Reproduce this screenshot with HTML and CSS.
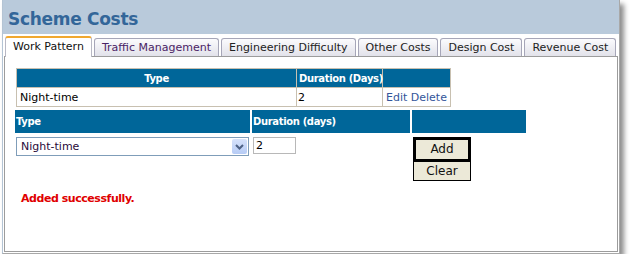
FILE: index.html
```html
<!DOCTYPE html>
<html>
<head>
<meta charset="utf-8">
<link rel="stylesheet" href="styles.css">
</head>
<body>
<div class="window">
  <div class="header"><h1 class="title">Scheme Costs</h1></div>
  <div class="tabs">
    <span class="tab active">Work Pattern</span>
    <span class="tab visited">Traffic Management</span>
    <span class="tab">Engineering Difficulty</span>
    <span class="tab">Other Costs</span>
    <span class="tab">Design Cost</span>
    <span class="tab">Revenue Cost</span>
  </div>
  <div class="panel">
    <table class="list">
      <colgroup>
        <col class="c1"><col class="c2"><col class="c3">
      </colgroup>
      <tr>
        <th>Type</th>
        <th>Duration (Days)</th>
        <th></th>
      </tr>
      <tr>
        <td>Night-time</td>
        <td>2</td>
        <td><a class="link">Edit</a> <a class="link">Delete</a></td>
      </tr>
    </table>
    <div class="form">
      <div class="fh">Type</div>
      <div class="fh">Duration (days)</div>
      <div class="fh"></div>
      <div class="fc">
        <div class="select">
          <span class="sel-text">Night-time</span>
          <span class="sel-btn">
            <svg width="9" height="6" viewBox="0 0 9 6"><path d="M1 1 L4.5 4.5 L8 1" fill="none" stroke="#4d6185" stroke-width="2"/></svg>
          </span>
        </div>
      </div>
      <div class="fc"><div class="input">2</div></div>
      <div class="fc btns">
        <div class="btn default">Add</div>
        <div class="btn">Clear</div>
      </div>
    </div>
    <div class="msg">Added successfully.</div>
  </div>
</div>
</body>
</html>
```
FILE: styles.css
```css
html, body {
  margin: 0;
  padding: 0;
  background: #fff;
}
body {
  font-family: "DejaVu Sans", Verdana, sans-serif;
  font-size: 11px;
  color: #000;
}
.window {
  margin-left: 2px;
  width: 618px;
  height: 254px;
  box-sizing: border-box;
  border-left: 1px solid #b4c4d4;
  border-right: 1px solid #a8a8a8;
  border-bottom: 1px solid #a8a8a8;
  padding: 0 1px 1px 0;
  background: #fff;
  box-shadow: 4px 4px 5px rgba(0,0,0,0.45);
  display: flex;
  flex-direction: column;
}
.header {
  height: 34px;
  flex: none;
  background: #b9cadb;
  margin-right: -1px;
  display: flex;
  align-items: flex-start;
}
.title {
  margin: 0;
  padding: 8px 0 0 5px;
  font-size: 17px;
  letter-spacing: -0.3px;
  line-height: 22px;
  font-weight: bold;
  color: #336699;
}
.tabs {
  display: flex;
  align-items: flex-end;
  gap: 2px;
  padding: 2px 0 0 2px;
  height: 20px;
  flex: none;
  position: relative;
  z-index: 1;
}
.tab {
  height: 18px;
  box-sizing: border-box;
  padding: 0 7px;
  line-height: 17px;
  border: 1px solid #a6a6b8;
  border-bottom: none;
  border-radius: 3px 3px 0 0;
  background: linear-gradient(#fbfbfd, #e2e2ea);
  color: #222;
  white-space: nowrap;
}
.tab.visited {
  color: #4a2466;
}
.tab.active {
  height: 21px;
  line-height: 18px;
  background: #fff;
  border-top: 2px solid #f0a830;
  border-color: #f0a830 #b8b8c4 #fff #b8b8c4;
  margin-bottom: -1px;
  color: #111;
  padding: 0 7px;
}
.panel {
  flex: 1;
  margin-left: 1px;
  border: 1px solid #9c9c9c;
  padding: 11px 0 0 11px;
}
.list {
  border-collapse: collapse;
  border: 1px solid #c8c0b0;
  table-layout: fixed;
  width: 434px;
  white-space: nowrap;
}
.list .c1 { width: 280px; }
.list .c2 { width: 86px; }
.list .c3 { width: 68px; }
.list th {
  background: #006699;
  color: #fff;
  font-weight: bold;
  font-size: 10px;
  letter-spacing: -0.35px;
  height: 18px;
  padding: 0 2px;
  border: 1px solid #c8c0b0;
  text-align: center;
}
.list th:nth-child(2) {
  text-align: left;
  padding-left: 2px;
}
.list td {
  height: 18px;
  padding: 0 3px;
  border: 1px solid #c8c0b0;
  overflow: hidden;
}
.list td:nth-child(2) {
  padding-left: 1px;
}
.link {
  color: #33559a;
}
.form {
  display: grid;
  grid-template-columns: 235px 158px 114px;
  column-gap: 2px;
  row-gap: 4px;
  margin: 3px 0 0 -1px;
}
.fh {
  background: #006699;
  color: #fff;
  font-weight: bold;
  font-size: 10px;
  letter-spacing: -0.35px;
  height: 23px;
  line-height: 23px;
  padding-left: 1px;
  white-space: nowrap;
}
.fc {
  padding-left: 1px;
}
.select {
  width: 233px;
  height: 19px;
  box-sizing: border-box;
  border: 1px solid #7f9db9;
  display: flex;
  align-items: center;
  justify-content: space-between;
  padding: 0 1px 0 4px;
  color: #2a0a3a;
}
.sel-btn {
  width: 15px;
  height: 15px;
  background: linear-gradient(#d6e2fb, #b6cbf5);
  border-radius: 2px;
  display: flex;
  align-items: center;
  justify-content: center;
}
.input {
  width: 43px;
  height: 17px;
  box-sizing: border-box;
  border: 1px solid #b8b8b8;
  line-height: 15px;
  padding-left: 2px;
}
.btns {
  display: flex;
  flex-direction: column;
}
.btn {
  width: 58px;
  height: 20px;
  box-sizing: border-box;
  border: 1px solid #000;
  background: #ece9d8;
  text-align: center;
  line-height: 18px;
  font-size: 12px;
  color: #111;
}
.btn.default {
  height: 24px;
  border-width: 3px 3px 2px 3px;
  line-height: 19px;
}
.msg {
  margin: 11px 0 0 5px;
  color: #e00000;
  font-weight: bold;
  letter-spacing: -0.45px;
}
```
